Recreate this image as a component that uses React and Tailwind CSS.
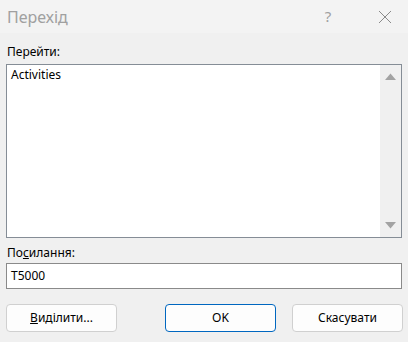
import React from "react";

function Btn({ children, primary }) {
  return (
    <button
      className={
        primary
          ? "h-[28px] w-[111px] rounded-[4px] border border-[#0067c0] bg-[#fdfdfd] text-[12px] text-black"
          : "h-[28px] w-[111px] rounded-[4px] border border-[#d0d0d0] bg-[#fdfdfd] text-[12px] text-black"
      }
    >
      {children}
    </button>
  );
}

export default function App() {
  return (
    <div
      className="w-[408px] h-[342px] bg-[#f0f0f0] flex flex-col text-black"
      style={{ fontFamily: '"Segoe UI", "Noto Sans", sans-serif' }}
    >
      <div className="h-[33px] bg-[#f3f3f3] flex items-center pl-[7px]">
        <span className="text-[16px] text-[#a0a0a0] flex-1">Перехід</span>
        <span className="text-[15px] text-[#a0a0a0] w-[20px] text-center mr-[40px]">?</span>
        <svg width="14" height="14" viewBox="0 0 14 14" className="mr-[16px]">
          <path d="M1 1 L13 13 M13 1 L1 13" stroke="#8a8a8a" strokeWidth="1" />
        </svg>
      </div>
      <div className="px-[6px] flex flex-col">
        <div className="text-[12px] leading-[16px] h-[31px] pt-[11px] pl-[1px]">Перейти:</div>
        <div className="h-[174px] border border-[#858d96] bg-white flex">
          <div className="flex-1 px-[4px] pt-[1px] text-[12px] leading-[18px]">Activities</div>
          <div className="w-[21px] bg-[#f0f0f0] flex flex-col items-center justify-between py-[8px]">
            <svg width="11" height="7" viewBox="0 0 11 7">
              <path d="M0 7 L5.5 0.5 L11 7 Z" fill="#a3a3a3" />
            </svg>
            <svg width="11" height="7" viewBox="0 0 11 7">
              <path d="M0 0 L5.5 6.5 L11 0 Z" fill="#a3a3a3" />
            </svg>
          </div>
        </div>
        <div className="text-[12px] leading-[16px] h-[25px] pt-[7px] pl-[1px]">
          По<span className="underline">с</span>илання:
        </div>
        <div className="h-[26px] border border-[#8a8a8a] bg-white text-[12px] flex items-center px-[4px]">
          T5000
        </div>
        <div className="flex justify-between items-center mt-[15px] pr-[-1px]">
          <Btn>
            <span className="underline">В</span>иділити...
          </Btn>
          <div className="flex gap-[16px] mr-[-1px]">
            <Btn primary>OK</Btn>
            <Btn>Скасувати</Btn>
          </div>
        </div>
      </div>
    </div>
  );
}
